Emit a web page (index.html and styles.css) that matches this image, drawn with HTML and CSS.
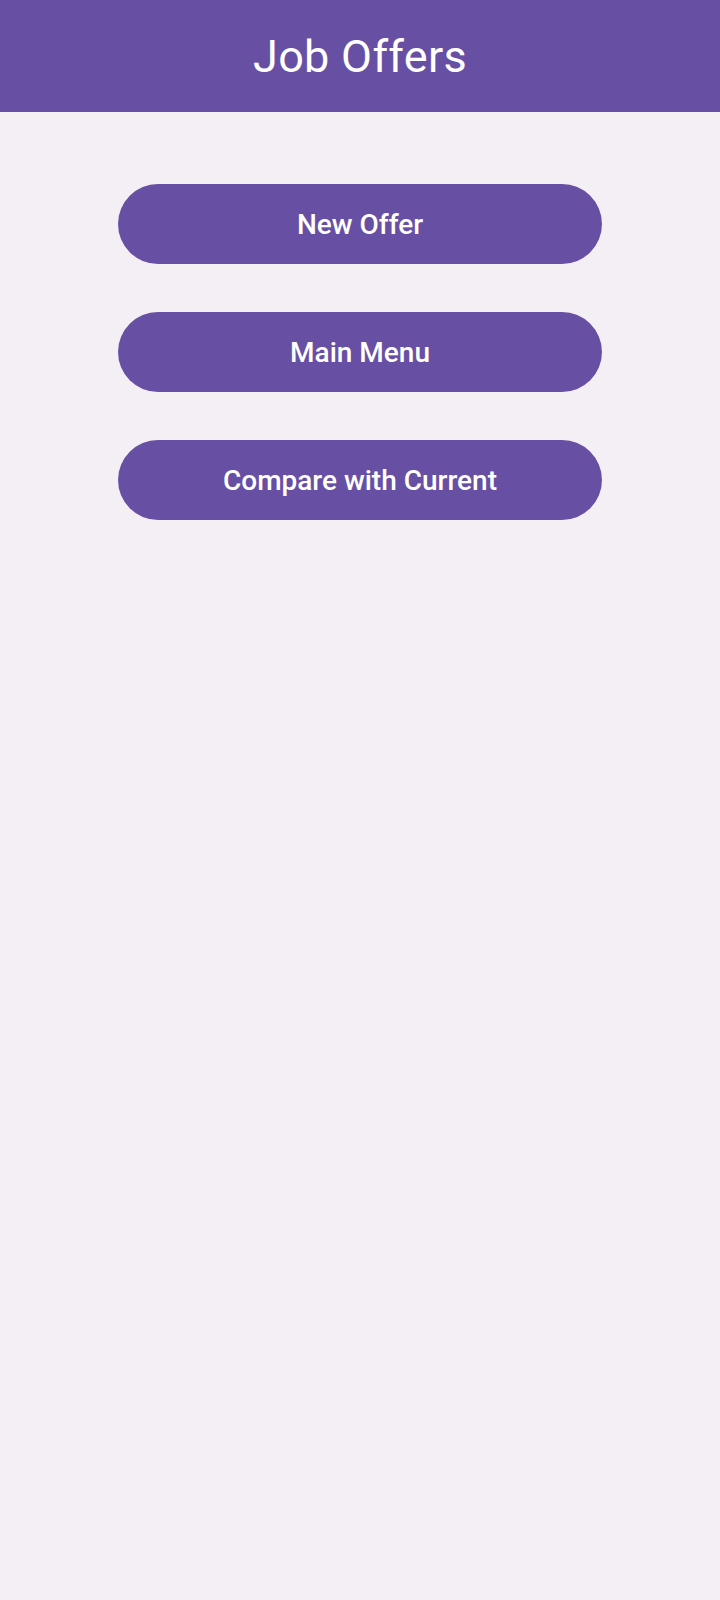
FILE: index.html
```html
<!DOCTYPE html>
<html lang="en">
<head>
<meta charset="utf-8">
<title>Job Offers</title>
<link rel="stylesheet" href="styles.css">
</head>
<body>
<header class="app-bar">
  <h1 class="app-title">Job Offers</h1>
</header>
<main class="content">
  <button class="pill-btn">New Offer</button>
  <button class="pill-btn">Main Menu</button>
  <button class="pill-btn">Compare with Current</button>
</main>
</body>
</html>
```

FILE: styles.css
```css
html, body {
  margin: 0;
  padding: 0;
}
body {
  width: 720px;
  min-height: 1600px;
  background: #f4eff4;
  font-family: Roboto, "Noto Sans", sans-serif;
}
.app-bar {
  height: 112px;
  background: #6750a4;
  display: flex;
  align-items: center;
  justify-content: center;
}
.app-title {
  margin: 0;
  color: #ffffff;
  font-size: 45px;
  font-weight: 400;
  line-height: 1;
  letter-spacing: 0.3px;
}
.content {
  display: flex;
  flex-direction: column;
  align-items: center;
  gap: 48px;
  padding-top: 72px;
}
.pill-btn {
  width: 484px;
  height: 80px;
  border: none;
  border-radius: 40px;
  background: #6750a4;
  color: #ffffff;
  font-family: Roboto, "Noto Sans", sans-serif;
  font-size: 28px;
  font-weight: 500;
  padding: 0;
}
```
